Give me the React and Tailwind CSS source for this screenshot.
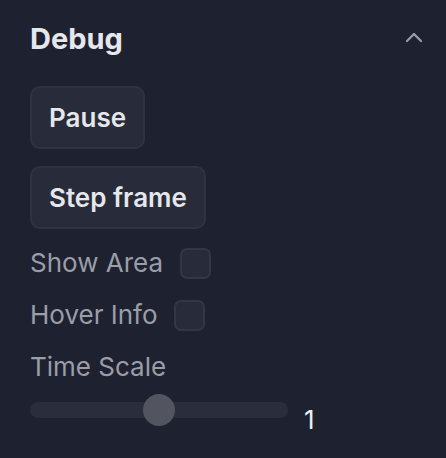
import React, { useState } from 'react';

const font = { fontFamily: 'Inter, "Noto Sans", sans-serif' };

const Checkbox = ({ checked, onChange }) => (
  <button
    onClick={() => onChange(!checked)}
    className="w-[31px] h-[31px] rounded-[7px] border-2 border-[#333644] bg-[#282b39] flex items-center justify-center"
  >
    {checked && <span className="w-3 h-3 rounded-sm bg-gray-300" />}
  </button>
);

const App = () => {
  const [paused, setPaused] = useState(false);
  const [showArea, setShowArea] = useState(false);
  const [hoverInfo, setHoverInfo] = useState(false);
  const [scale, setScale] = useState(1);

  const pct = (scale / 2) * 100;

  return (
    <div className="w-[446px] h-[458px] bg-[#1e2130] pl-[30px] pr-[24px] pt-[19px]" style={font}>
      {/* Header */}
      <div className="flex items-center justify-between h-[40px]">
        <h2 className="text-[29px] font-bold text-[#e6e7ea]">Debug</h2>
        <svg width="18" height="12" viewBox="0 0 18 12" fill="none" className="mr-[-1px] mt-[-4px]">
          <path d="M2 10 L9 3 L16 10" stroke="#9a9ea9" strokeWidth="2.2" strokeLinecap="round" strokeLinejoin="round" />
        </svg>
      </div>

      <div className="flex flex-col items-start mt-[27px]">
        <button
          onClick={() => setPaused(!paused)}
          className="h-[63px] px-[17px] rounded-[10px] border-2 border-[#2f3240] bg-[#282b39] text-[26px] font-semibold text-[#e6e7ea]"
        >
          {paused ? 'Resume' : 'Pause'}
        </button>
        <button className="mt-[17px] h-[63px] px-[17px] rounded-[10px] border-2 border-[#2f3240] bg-[#282b39] text-[26px] font-semibold text-[#e6e7ea]">
          Step frame
        </button>

        <div className="mt-[16px] flex items-center gap-[17px] h-[36px]">
          <span className="text-[26px] text-[#9b9da7] leading-[36px]">Show Area</span>
          <Checkbox checked={showArea} onChange={setShowArea} />
        </div>
        <div className="mt-[16px] flex items-center gap-[16px] h-[36px]">
          <span className="text-[26px] text-[#9b9da7] leading-[36px]">Hover Info</span>
          <Checkbox checked={hoverInfo} onChange={setHoverInfo} />
        </div>
        <div className="mt-[16px] h-[36px]">
          <span className="text-[26px] text-[#9b9da7] leading-[36px]">Time Scale</span>
        </div>

        <div className="mt-[2px] flex items-center">
          <div className="relative w-[258px] h-[32px] flex items-center">
            <div className="w-full h-[16px] rounded-full bg-[#2a2d3b]" />
            <div
              className="absolute w-[32px] h-[32px] rounded-full bg-[#52545f] -translate-x-1/2"
              style={{ left: `${pct}%` }}
            />
            <input
              type="range"
              min="0"
              max="2"
              step="0.1"
              value={scale}
              onChange={(e) => setScale(Number(e.target.value))}
              className="absolute inset-0 opacity-0 w-full"
            />
          </div>
          <span className="ml-[16px] mt-[20px] text-[26px] text-[#eeeff1] leading-none">{scale}</span>
        </div>
      </div>
    </div>
  );
};

export default App;
